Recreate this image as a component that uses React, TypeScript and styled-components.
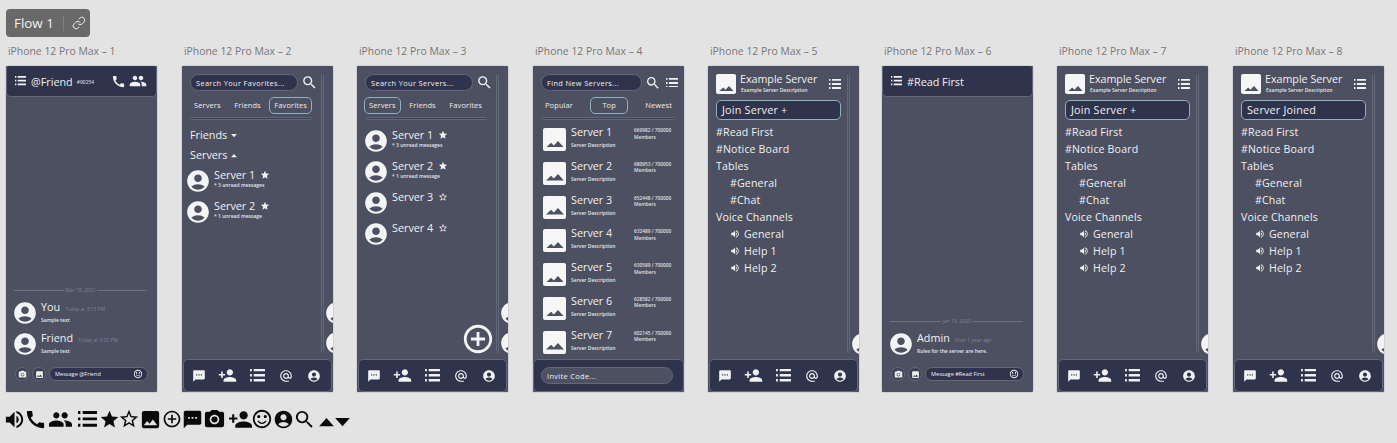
import React from 'react'
import styled, { createGlobalStyle } from 'styled-components'
import { Link as LinkIcon } from 'lucide-react'
import {
  MdVolumeUp, MdCall, MdPeople, MdStar, MdStarBorder, MdImage, MdAddCircleOutline,
  MdSms, MdPhotoCamera, MdPersonAdd, MdSentimentSatisfiedAlt, MdAccountCircle, MdSearch,
  MdAlternateEmail,
} from 'react-icons/md'

const PANEL = '#4c5061'
const DARK = '#2f334b'
const EDGE = '#62677a'
const ACTIVE = '#8fb0c0'
const FONT = '"Open Sans", "Noto Sans", sans-serif'

const Global = createGlobalStyle`
  html, body { margin: 0; padding: 0; background: #e3e3e3; }
  body { font-family: ${FONT}; width: 1397px; height: 443px; overflow: hidden; }
`

const Page = styled.div`
  padding: 9px 0 0 6px;
`
const FlowChip = styled.div`
  display: inline-flex;
  align-items: center;
  height: 28px;
  width: 84px;
  box-sizing: border-box;
  padding-left: 8px;
  border-radius: 4px;
  background: #696969;
  color: #f2f2f2;
  font-size: 13.4px;
  font-weight: 500;
`
const ChipDivider = styled.span`
  width: 1px;
  height: 15px;
  margin: 0 8px 0 9px;
  background: #808080;
`
const Frames = styled.div`
  display: flex;
  margin-top: 7px;
`
const Column = styled.div<{ $step: number }>`
  width: ${p => p.$step}px;
  flex: none;
`
const FrameLabel = styled.div`
  height: 22px;
  line-height: 15px;
  padding-left: 2px;
  color: #777;
  font-size: 10.4px;
  white-space: nowrap;
`
const Phone = styled.div`
  position: relative;
  display: flex;
  flex-direction: column;
  width: 151px;
  height: 326px;
  overflow: hidden;
  background: ${PANEL};
  box-shadow: 0 0 0 1px #d0d1d6;
  border-radius: 1px;
  color: #f1f1f1;
`
const Scrollbar = styled.div`
  position: absolute;
  top: 8px;
  left: 139px;
  width: 3px;
  height: 279px;
  box-sizing: border-box;
  border: 1px solid ${EDGE};
  border-radius: 2px;
`
const PeekAvatar = styled.div<{ $top: number }>`
  position: absolute;
  left: 142px;
  top: ${p => p.$top}px;
  display: flex;
  color: #f4f4f4;
`
const Fab = styled.div`
  position: absolute;
  left: 104px;
  top: 256px;
  display: flex;
  color: #f4f4f4;
`
const Body = styled.div`
  flex: 1;
  display: flex;
  flex-direction: column;
  min-height: 0;
  padding: 8px 0 0 8px;
`
const Header = styled.div`
  display: flex;
  align-items: center;
  height: 31px;
  flex: none;
  box-sizing: border-box;
  padding: 0 9px 0 8px;
  background: ${DARK};
  border: 1px solid ${EDGE};
  border-top: 0;
  border-radius: 3px 3px 5px 5px;
  font-size: 10.8px;
`
const HeaderName = styled.span`
  margin-left: 5px;
`
const Tag = styled.span`
  margin-left: 4px;
  margin-top: 2px;
  font-size: 5px;
  font-weight: 600;
  color: #c9cbd3;
`
const HeaderActions = styled.div`
  display: flex;
  align-items: center;
  gap: 3px;
  margin-left: auto;
`
const Feed = styled.div`
  flex: 1;
  display: flex;
  flex-direction: column;
  justify-content: flex-end;
  padding: 0 10px 0 8px;
`
const DateLine = styled.div`
  display: flex;
  align-items: center;
  gap: 1px;
  margin-bottom: 4px;
  color: #80848f;
  font-size: 5px;
  &::before, &::after {
    content: '';
    flex: 1;
    height: 1px;
    background: #6c7081;
  }
`
const MessageRow = styled.div`
  display: flex;
  align-items: center;
  height: 31px;
  gap: 3px;
`
const AvatarSlot = styled.div`
  display: flex;
  margin-left: -2px;
  color: #f4f4f4;
`
const Author = styled.div`
  display: flex;
  align-items: baseline;
  gap: 5px;
  font-size: 10.8px;
  line-height: 14px;
`
const Stamp = styled.span`
  font-size: 5px;
  color: #80848f;
`
const Fine = styled.div`
  font-size: 5px;
  font-weight: 600;
  line-height: 9px;
  color: #e6e6e9;
`
const Composer = styled.div`
  display: flex;
  align-items: center;
  gap: 3px;
  height: 33px;
  flex: none;
  box-sizing: border-box;
  padding: 0 0 3px 9px;
`
const RoundButton = styled.div`
  display: flex;
  align-items: center;
  justify-content: center;
  width: 14px;
  height: 14px;
  box-sizing: border-box;
  border: 1px solid ${EDGE};
  border-radius: 50%;
  background: #3d4155;
`
const MessageBox = styled.div`
  display: flex;
  align-items: center;
  justify-content: space-between;
  width: 99px;
  height: 14px;
  box-sizing: border-box;
  padding: 0 4px 0 5px;
  border: 1px solid ${EDGE};
  border-radius: 7px;
  background: ${DARK};
  font-size: 5.6px;
`
const SearchRow = styled.div`
  display: flex;
  align-items: center;
  gap: 3px;
  height: 17px;
  flex: none;
`
const ListSlot = styled.span`
  display: flex;
  margin-left: 2px;
`
const Pill = styled.div<{ $width: number; $light?: boolean }>`
  display: flex;
  align-items: center;
  width: ${p => p.$width}px;
  height: 17px;
  flex: none;
  box-sizing: border-box;
  padding-left: 5px;
  border: 1px solid ${EDGE};
  border-radius: 9px;
  background: ${p => (p.$light ? PANEL : DARK)};
  font-size: 7.4px;
  letter-spacing: 0.35px;
  white-space: nowrap;
`
const Tabs = styled.div<{ $width: number }>`
  display: flex;
  justify-content: space-between;
  align-items: center;
  width: ${p => p.$width}px;
  height: 17px;
  flex: none;
  margin-top: 6px;
  margin-left: -1px;
  font-size: 7.5px;
  letter-spacing: 0.1px;
`
const Tab = styled.div<{ $active?: boolean; $wide?: boolean }>`
  display: flex;
  align-items: center;
  justify-content: center;
  height: 17px;
  box-sizing: border-box;
  padding: 0 ${p => (p.$wide ? 11 : 4)}px 1px;
  border: 1px solid ${p => (p.$active ? ACTIVE : 'transparent')};
  border-radius: 5px;
  color: #ececef;
`
const Rail = styled.div<{ $width: number }>`
  width: ${p => p.$width}px;
  height: 3px;
  flex: none;
  margin-top: 3px;
  box-sizing: border-box;
  border: 1px solid ${EDGE};
  border-radius: 2px;
  background: #3d4155;
`
const Spacer = styled.div<{ $h: number }>`
  height: ${p => p.$h}px;
  flex: none;
`
const GroupTitle = styled.div`
  display: flex;
  align-items: center;
  height: 20px;
  gap: 4px;
  font-size: 10.8px;
`
const CaretSlot = styled.span`
  display: flex;
  margin-top: 4px;
`
const FavoriteGroup = styled.div`
  margin: 4px 0 0 -3px;
`
const ServerRow = styled.div`
  display: flex;
  height: 31px;
  flex: none;
  gap: 3px;
`
const ServerName = styled.div`
  display: flex;
  align-items: center;
  gap: 5px;
  font-size: 10.8px;
  line-height: 13px;
`
const Thumb = styled.div<{ $size: number }>`
  display: flex;
  align-items: flex-end;
  justify-content: center;
  width: ${p => p.$size}px;
  height: ${p => p.$size}px;
  flex: none;
  box-sizing: border-box;
  padding-bottom: ${p => Math.round(p.$size / 6)}px;
  border-radius: 2px;
  background: #f6f6f6;
  color: ${PANEL};
`
const DiscoverList = styled.div`
  margin: 7px 0 0 2px;
`
const DiscoverRow = styled.div`
  display: flex;
  height: 33.8px;
  box-sizing: border-box;
  gap: 5px;
  padding-top: 1px;
`
const DiscoverInfo = styled.div`
  width: 58px;
  margin-top: -3px;
  font-size: 10.8px;
  line-height: 13px;
`
const DiscoverDesc = styled(Fine)`
  margin-top: 3px;
`
const Stats = styled.div`
  margin-top: -1px;
  font-size: 4.8px;
  font-weight: 600;
  line-height: 6.5px;
  color: #dfe0e4;
`
const BottomBar = styled.div`
  display: grid;
  grid-template-columns: 28px 28px 32px 26px 30px;
  justify-items: center;
  align-items: center;
  height: 33px;
  flex: none;
  margin: 0 1px;
  padding-left: 1px;
  box-sizing: border-box;
  background: ${DARK};
  border: 1px solid ${EDGE};
  border-radius: 5px;
`
const InviteBar = styled.div`
  display: flex;
  align-items: center;
  height: 33px;
  flex: none;
  box-sizing: border-box;
  padding-left: 7px;
  background: ${DARK};
  border: 1px solid ${EDGE};
  border-radius: 5px;
`
const ServerHead = styled.div`
  display: flex;
  height: 26px;
  flex: none;
  gap: 4px;
`
const ServerTitle = styled.div`
  width: 82px;
  margin-top: -1px;
  font-size: 10.7px;
  line-height: 13px;
  white-space: nowrap;
`
const ServerDesc = styled(Fine)`
  margin: 1px 0 0 1px;
  line-height: 7px;
  white-space: nowrap;
`
const HeadIcon = styled.div`
  display: flex;
  align-items: center;
  height: 20px;
  margin-left: 3px;
`
const JoinButton = styled.div`
  display: flex;
  align-items: center;
  width: 125px;
  height: 20px;
  flex: none;
  box-sizing: border-box;
  padding: 0 0 1px 5px;
  border: 1px solid ${ACTIVE};
  border-radius: 5px;
  background: ${DARK};
  font-size: 10.8px;
  letter-spacing: 0.2px;
`
const ChannelList = styled.div`
  margin-top: 3px;
`
const Channel = styled.div<{ $indent?: boolean }>`
  display: flex;
  align-items: center;
  gap: 4px;
  height: 17px;
  padding-left: ${p => (p.$indent ? 14 : 0)}px;
  font-size: 10.6px;
  letter-spacing: 0.15px;
`
const Legend = styled.div`
  display: flex;
  align-items: center;
  height: 20px;
  margin: 17px 0 0 -3px;
  color: #0a0a0a;
`
const LegendItem = styled.span<{ $shift: number; $low?: boolean }>`
  display: flex;
  flex: none;
  margin-left: ${p => p.$shift}px;
  margin-top: ${p => (p.$low ? 7 : 0)}px;
`

const Caret = ({ up, size = 6 }: { up?: boolean; size?: number }) => (
  <svg width={size} height={size * 0.55} viewBox="0 0 16 9" fill="currentColor">
    <path d={up ? 'M8 0l8 9H0z' : 'M0 0h16L8 9z'} />
  </svg>
)

// heavier than the Material list icon: bullets and bars of equal height
const ListGlyph = ({ size }: { size: number }) => (
  <svg width={size} height={size * 0.83} viewBox="0 0 18 15" fill="currentColor">
    <path d="M0 0h2.2v2.8H0zM4.4 0H18v2.8H4.4zM0 6.1h2.2v2.8H0zM4.4 6.1H18v2.8H4.4zM0 12.2h2.2V15H0zM4.4 12.2H18V15H4.4z" />
  </svg>
)

const Nav = () => (
  <BottomBar>
    <MdSms size={14} />
    <MdPersonAdd size={19} />
    <ListGlyph size={15} />
    <MdAlternateEmail size={14} />
    <MdAccountCircle size={14} />
  </BottomBar>
)

const Scene = ({ width }: { width: number }) => (
  <svg width={width} height={width * 0.36} viewBox="0 0 18 6.5" fill="currentColor">
    <path d="M0 6.5 5 1.8l2.8 2.6L12 0l6 6.5z" />
  </svg>
)

const ChatScreen = ({
  header, tag, date, messages, placeholder, actions,
}: {
  header: string
  tag?: string
  date: string
  messages: { who: string; when: string; text: string }[]
  placeholder: string
  actions?: boolean
}) => (
  <Phone>
    <Header>
      <ListGlyph size={11} />
      <HeaderName>{header}</HeaderName>
      {tag && <Tag>{tag}</Tag>}
      {actions && (
        <HeaderActions>
          <MdCall size={15} />
          <MdPeople size={18} />
        </HeaderActions>
      )}
    </Header>
    <Feed>
      <DateLine>{date}</DateLine>
      {messages.map(m => (
        <MessageRow key={m.who}>
          <AvatarSlot><MdAccountCircle size={26} /></AvatarSlot>
          <div>
            <Author>{m.who}<Stamp>{m.when}</Stamp></Author>
            <Fine>{m.text}</Fine>
          </div>
        </MessageRow>
      ))}
    </Feed>
    <Composer>
      <RoundButton><MdPhotoCamera size={9} /></RoundButton>
      <RoundButton><MdImage size={9} /></RoundButton>
      <MessageBox>
        {placeholder}
        <MdSentimentSatisfiedAlt size={10} />
      </MessageBox>
    </Composer>
  </Phone>
)

const FavoriteRow = ({ name, note, starred }: { name: string; note?: string; starred: boolean }) => (
  <ServerRow>
    <AvatarSlot><MdAccountCircle size={26} /></AvatarSlot>
    <div>
      <ServerName>
        {name}
        {starred ? <MdStar size={10} /> : <MdStarBorder size={10} />}
      </ServerName>
      {note && <Fine>{note}</Fine>}
    </div>
  </ServerRow>
)

const ListFrame = ({ children, tab, search }: { children: React.ReactNode; tab: number; search: string }) => (
  <Phone>
    <Scrollbar />
    <Body>
      <SearchRow>
        <Pill $width={108}>{search}</Pill>
        <MdSearch size={17} />
      </SearchRow>
      <Tabs $width={123}>
        {['Servers', 'Friends', 'Favorites'].map((t, i) => (
          <Tab key={t} $active={i === tab}>{t}</Tab>
        ))}
      </Tabs>
      <Rail $width={122} />
      {children}
    </Body>
    <PeekAvatar $top={234}><MdAccountCircle size={26} /></PeekAvatar>
    <PeekAvatar $top={264}><MdAccountCircle size={26} /></PeekAvatar>
    <Nav />
  </Phone>
)

const discover = [
  ['Server 1', '669982 / 700000'],
  ['Server 2', '680953 / 700000'],
  ['Server 3', '652448 / 700000'],
  ['Server 4', '632489 / 700000'],
  ['Server 5', '630589 / 700000'],
  ['Server 6', '628582 / 700000'],
  ['Server 7', '602145 / 700000'],
]

const DiscoverScreen = () => (
  <Phone>
    <Body>
      <SearchRow>
        <Pill $width={101}>Find New Servers...</Pill>
        <MdSearch size={16} />
        <ListSlot><ListGlyph size={12} /></ListSlot>
      </SearchRow>
      <Tabs $width={137}>
        <Tab>Popular</Tab>
        <Tab $active $wide>Top</Tab>
        <Tab>Newest</Tab>
      </Tabs>
      <Rail $width={135} />
      <DiscoverList>
        {discover.map(([name, count]) => (
          <DiscoverRow key={name}>
            <Thumb $size={23}><Scene width={18} /></Thumb>
            <DiscoverInfo>
              {name}
              <DiscoverDesc>Server Description</DiscoverDesc>
            </DiscoverInfo>
            <Stats>{count}<br />Members</Stats>
          </DiscoverRow>
        ))}
      </DiscoverList>
    </Body>
    <InviteBar>
      <Pill $width={132} $light>Invite Code...</Pill>
    </InviteBar>
  </Phone>
)

const ServerScreen = ({ action }: { action: string }) => (
  <Phone>
    <Scrollbar />
    <Body>
      <ServerHead>
        <Thumb $size={20}><Scene width={15} /></Thumb>
        <div>
          <ServerTitle>Example Server</ServerTitle>
          <ServerDesc>Example Server Description</ServerDesc>
        </div>
        <HeadIcon><ListGlyph size={12} /></HeadIcon>
      </ServerHead>
      <JoinButton>{action}</JoinButton>
      <ChannelList>
        <Channel>#Read First</Channel>
        <Channel>#Notice Board</Channel>
        <Channel>Tables</Channel>
        <Channel $indent>#General</Channel>
        <Channel $indent>#Chat</Channel>
        <Channel>Voice Channels</Channel>
        {['General', 'Help 1', 'Help 2'].map(v => (
          <Channel key={v} $indent><MdVolumeUp size={10} />{v}</Channel>
        ))}
      </ChannelList>
    </Body>
    <PeekAvatar $top={265}><MdAccountCircle size={26} /></PeekAvatar>
    <Nav />
  </Phone>
)

const screens: React.ReactNode[] = [
  <ChatScreen
    header="@Friend"
    tag="#90254"
    date="Mar 18, 2021"
    actions
    placeholder="Message @Friend"
    messages={[
      { who: 'You', when: 'Today at 3:15 PM', text: 'Sample text' },
      { who: 'Friend', when: 'Today at 3:20 PM', text: 'Sample text' },
    ]}
  />,
  <ListFrame tab={2} search="Search Your Favorites...">
    <Spacer $h={4} />
    <GroupTitle>Friends <CaretSlot><Caret /></CaretSlot></GroupTitle>
    <GroupTitle>Servers <CaretSlot><Caret up /></CaretSlot></GroupTitle>
    <FavoriteGroup>
      <FavoriteRow name="Server 1" note="* 3 unread messages" starred />
      <FavoriteRow name="Server 2" note="* 1 unread message" starred />
    </FavoriteGroup>
  </ListFrame>,
  <ListFrame tab={0} search="Search Your Servers...">
    <Spacer $h={8} />
    <FavoriteRow name="Server 1" note="* 3 unread messages" starred />
    <FavoriteRow name="Server 2" note="* 1 unread message" starred />
    <FavoriteRow name="Server 3" starred={false} />
    <FavoriteRow name="Server 4" starred={false} />
    <Fab><MdAddCircleOutline size={34} /></Fab>
  </ListFrame>,
  <DiscoverScreen />,
  <ServerScreen action="Join Server +" />,
  <ChatScreen
    header="#Read First"
    date="Jan 19, 2020"
    placeholder="Message #Read First"
    messages={[{ who: 'Admin', when: 'Over 1 year ago', text: 'Rules for the server are here.' }]}
  />,
  <ServerScreen action="Join Server +" />,
  <ServerScreen action="Server Joined" />,
]

// left edges in the design are not evenly spaced
const steps = [176, 175, 176, 175, 174, 175, 176, 151]

const legend: [React.ElementType, number, number][] = [
  [MdVolumeUp, 23, 0],
  [MdCall, 23, -2],
  [MdPeople, 25, 1],
]
const legendRest: [React.ElementType, number, number][] = [
  [MdStar, 21, 2],
  [MdStarBorder, 22, -2],
  [MdImage, 23, -1],
  [MdAddCircleOutline, 20, 0],
  [MdSms, 21, 0],
  [MdPhotoCamera, 23, 0],
  [MdPersonAdd, 25, 2],
  [MdSentimentSatisfiedAlt, 22, -2],
  [MdAccountCircle, 21, 0],
  [MdSearch, 23, -1],
]

export default function App() {
  return (
    <Page>
      <Global />
      <FlowChip>
        Flow 1
        <ChipDivider />
        <LinkIcon size={14} strokeWidth={1.6} />
      </FlowChip>
      <Frames>
        {screens.map((s, i) => (
          <Column key={i} $step={steps[i]}>
            <FrameLabel>iPhone 12 Pro Max – {i + 1}</FrameLabel>
            {s}
          </Column>
        ))}
      </Frames>
      <Legend>
        {legend.map(([Icon, size, shift], i) => (
          <LegendItem key={i} $shift={shift}><Icon size={size} /></LegendItem>
        ))}
        <LegendItem $shift={5}><ListGlyph size={19} /></LegendItem>
        {legendRest.map(([Icon, size, shift], i) => (
          <LegendItem key={i} $shift={shift}><Icon size={size} /></LegendItem>
        ))}
        <LegendItem $shift={3} $low><Caret up size={15} /></LegendItem>
        <LegendItem $shift={1} $low><Caret size={15} /></LegendItem>
      </Legend>
    </Page>
  )
}
